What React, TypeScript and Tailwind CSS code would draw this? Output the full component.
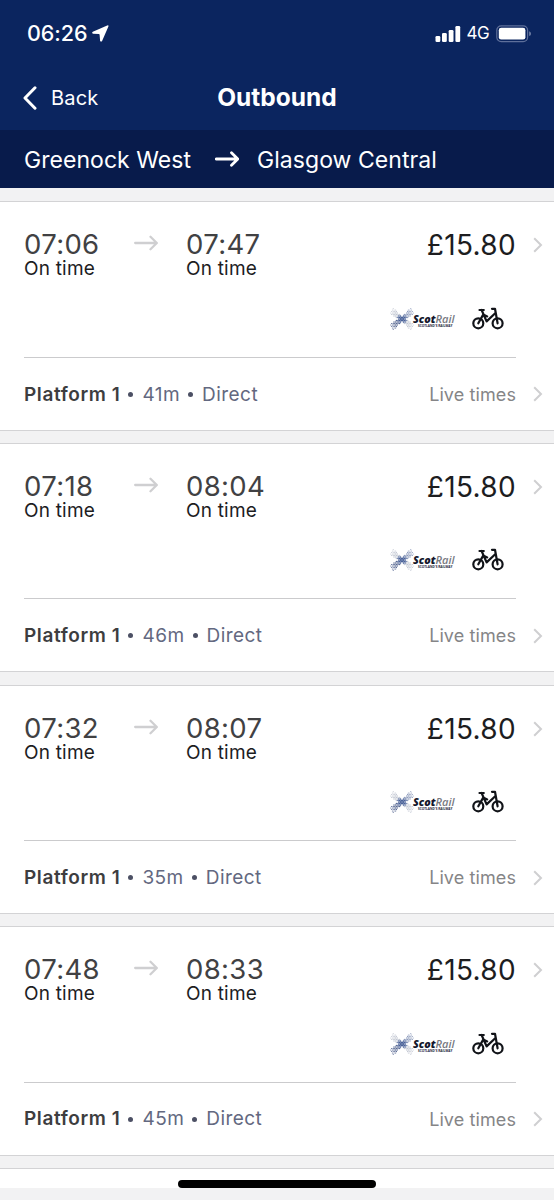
interface Journey {
  departs: string;
  arrives: string;
  price: string;
  platform: string;
  duration: string;
}

const journeys: Journey[] = [
  { departs: '07:06', arrives: '07:47', price: '£15.80', platform: 'Platform 1', duration: '41m' },
  { departs: '07:18', arrives: '08:04', price: '£15.80', platform: 'Platform 1', duration: '46m' },
  { departs: '07:32', arrives: '08:07', price: '£15.80', platform: 'Platform 1', duration: '35m' },
  { departs: '07:48', arrives: '08:33', price: '£15.80', platform: 'Platform 1', duration: '45m' },
];

// Halftone saltire: two bands of dots that shrink away from the crossing.
const saltireDots = (() => {
  const dots: { x: number; y: number; r: number; fill: string }[] = [];
  for (let row = -7; row <= 7; row++) {
    for (let col = -9; col <= 9; col++) {
      const x = col * 1.6 + (row % 2 ? 0.8 : 0);
      const y = row * 1.5;
      const rising = Math.abs(y + x * 0.8) / 1.28;
      const falling = Math.abs(y - x * 0.8) / 1.28;
      const distance = Math.hypot(x, y);
      if (Math.min(rising, falling) > 1.9 + distance * 0.11 || distance > 14) continue;
      let fill = '#c3c8d3';
      if (distance < 5) fill = '#4a6299';
      else if (rising < falling) fill = x < 0 ? '#5a6a94' : '#8e9cbc';
      dots.push({ x: x + 15, y: y + 11, r: Math.max(0.45, 0.95 - distance * 0.03), fill });
    }
  }
  return dots;
})();

function ScotRailLogo() {
  return (
    <svg width="68" height="22" viewBox="0 0 68 22" className="shrink-0 overflow-visible">
      {saltireDots.map((dot) => (
        <circle key={`${dot.x}:${dot.y}`} cx={dot.x} cy={dot.y} r={dot.r} fill={dot.fill} />
      ))}
      <g className="font-['Open_Sans',sans-serif] italic">
        <text x="26" y="14.6" fontSize="10.8" fontWeight="800" fill="#14172b" textLength="22.5" lengthAdjust="spacingAndGlyphs">
          Scot
        </text>
        <text x="48.5" y="14.6" fontSize="10.8" fontWeight="600" fill="#77797f" textLength="19" lengthAdjust="spacingAndGlyphs">
          Rail
        </text>
      </g>
      <text
        x="31"
        y="18.6"
        fontSize="3.5"
        fontWeight="700"
        fill="#20233a"
        textLength="34.5"
        lengthAdjust="spacingAndGlyphs"
        className="font-['Open_Sans',sans-serif]"
      >
        SCOTLAND'S RAILWAY
      </text>
    </svg>
  );
}

function BikeIcon() {
  return (
    <svg width="32" height="24" viewBox="0 0 32 24" fill="none" stroke="#111318" strokeWidth="2.2" strokeLinejoin="round" strokeLinecap="round" className="shrink-0">
      <circle cx="6.3" cy="16.3" r="5" />
      <circle cx="25.6" cy="16.3" r="5" />
      <path d="M7.5 3H11.8M9.6 3L14.6 14.4L23.2 6.2M6.3 16.3L11.2 7.6L15.2 9.4M20 1.8H23L25.6 16.3" />
    </svg>
  );
}

function ArrowIcon({ className }: { className: string }) {
  return (
    <svg width="24" height="16" viewBox="0 0 24 16" fill="none" stroke="currentColor" strokeLinecap="round" strokeLinejoin="round" className={className}>
      <path d="M1.2 8H22.5M16.5 1.8L22.8 8L16.5 14.2" />
    </svg>
  );
}

function ChevronIcon() {
  return (
    <svg width="10" height="16" viewBox="0 0 10 16" fill="none" stroke="#cfcfd1" strokeWidth="2" className="shrink-0">
      <path d="M1.2 1.2L8 8L1.2 14.8" />
    </svg>
  );
}

function StatusBar() {
  return (
    <div className="flex h-[67px] items-center pr-[22.5px] pl-[27px]">
      <span className="text-[21.5px] leading-none font-medium tracking-[-0.05px]">06:26</span>
      <svg width="17" height="17" viewBox="0 0 17 17" className="ml-[5px]">
        <path d="M15.2 0.4Q16.9 -0.2 16.4 1.5L10.1 15.9Q9.2 17.2 8.1 15.9L7.6 9.8Q7.5 9.2 6.9 9.1L1 8.8Q-0.6 7.9 0.8 6.8Z" fill="currentColor" />
      </svg>
      <svg width="26" height="16" viewBox="0 0 26 16" fill="currentColor" className="ml-auto">
        <rect x="0.5" y="10" width="4.8" height="6" rx="1.3" />
        <rect x="7" y="7" width="4.8" height="9" rx="1.3" />
        <rect x="13.7" y="4" width="4.8" height="12" rx="1.3" />
        <rect x="20.4" y="0" width="4.8" height="16" rx="1.3" />
      </svg>
      <span className="ml-[5.5px] text-[17px] leading-none tracking-[-0.6px]">4G</span>
      <svg width="36" height="18" viewBox="0 0 36 18" className="ml-[6.5px]">
        <rect x="0.8" y="0.8" width="30.8" height="15.8" rx="4.4" fill="none" stroke="#5e6f9a" strokeWidth="1.2" />
        <rect x="2.8" y="2.8" width="26.6" height="11.8" rx="2.4" fill="currentColor" />
        <path d="M33.2 6.3Q35 7 35 8.7Q35 10.4 33.2 11.1Z" fill="#7382a8" />
      </svg>
    </div>
  );
}

function Header() {
  return (
    <header className="text-white">
      <div className="h-[130px] bg-[#0b255f]">
        <StatusBar />
        <div className="grid h-[61px] grid-cols-[1fr_auto_1fr] items-center px-6">
          <div className="flex items-center text-[20px]">
            <svg width="14" height="24" viewBox="0 0 14 24" fill="none" stroke="currentColor" strokeWidth="3" strokeLinecap="round" strokeLinejoin="round" className="-ml-px">
              <path d="M12 1.8L2 12L12 22.2" />
            </svg>
            <span className="ml-[14px] tracking-[0.2px]">Back</span>
          </div>
          <h1 className="text-[24.5px] leading-none font-bold">Outbound</h1>
        </div>
      </div>
      <div className="flex h-[58px] items-center bg-[#081b4b] pl-6 text-[23px]">
        <span className="w-[191px] pt-[2px] tracking-[0.05px]">Greenock West</span>
        <ArrowIcon className="h-4 w-6 stroke-[2.8]" />
        <span className="ml-[18px] pt-[2px] tracking-[0.05px]">Glasgow Central</span>
      </div>
    </header>
  );
}

function StopTime({ time }: { time: string }) {
  return (
    <div>
      <div className="text-[27.5px] leading-[28px] tracking-[0.35px] text-[#414143]">{time}</div>
      <div className="text-[19px] leading-[22px] tracking-[0.2px] text-[#1d1d1f]">On time</div>
    </div>
  );
}

function JourneyCard({ journey }: { journey: Journey }) {
  return (
    <article className="h-[229.4px] border-y-[1.5px] border-[#d3d3d5] bg-white pl-6">
      <div className="flex h-[88px] items-start pt-[28px]">
        <div className="w-[110px]">
          <StopTime time={journey.departs} />
        </div>
        <ArrowIcon className="mt-[5px] h-4 w-6 stroke-[2.3] text-[#cfcfd1]" />
        <div className="ml-[28px]">
          <StopTime time={journey.arrives} />
        </div>
        <div className="mt-[1px] ml-auto flex items-center pr-[11px]">
          <span className="mr-[17px] text-[28px] leading-[28px] tracking-[0.35px] text-[#1d1d1f]">{journey.price}</span>
          <ChevronIcon />
        </div>
      </div>
      <div className="mr-[38px] flex h-[67.5px] justify-end border-b-[1.5px] border-[#cbcbcd] pr-3">
        <div className="flex h-[57px] items-center gap-[17px]">
          <ScotRailLogo />
          <BikeIcon />
        </div>
      </div>
      <div className="flex h-[71px] items-center pt-[2px] pr-[11px] text-[19px] tracking-[0.45px]">
        <span className="pt-px font-semibold tracking-[0.6px] text-[#3d3d3f]">{journey.platform}</span>
        <span className="ml-[8px] size-[5px] rounded-full bg-[#4c5064]" />
        <span className="ml-[9px] pt-px text-[#636880]">{journey.duration}</span>
        <span className="ml-[8px] size-[5px] rounded-full bg-[#4c5064]" />
        <span className="ml-[9px] pt-px text-[#636880]">Direct</span>
        <span className="mr-[17px] ml-auto text-[18px] tracking-[0.1px] text-[#858587]">Live times</span>
        <ChevronIcon />
      </div>
    </article>
  );
}

export default function App() {
  return (
    <div className="relative h-[1200px] w-[554px] overflow-hidden bg-[#f2f2f3] font-['Inter',sans-serif]">
      <Header />
      <main className="mt-[13.4px] flex flex-col gap-[12.2px]">
        {journeys.map((journey) => (
          <JourneyCard key={journey.departs} journey={journey} />
        ))}
        <div className="h-[20px] border-t-[1.5px] border-[#d3d3d5] bg-white" />
      </main>
      <div className="absolute top-[1180px] left-[178px] h-2 w-[198px] rounded-full bg-black" />
    </div>
  );
}
